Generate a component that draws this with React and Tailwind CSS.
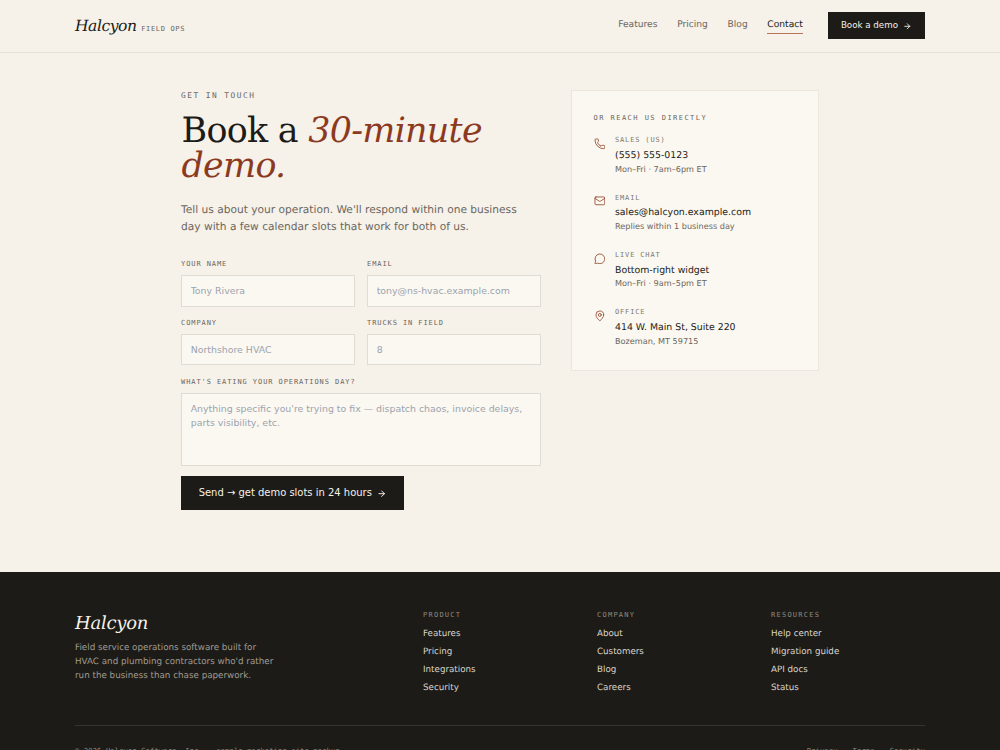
import React from "react";
import { ArrowRight, Mail, MapPin, MessageCircle, Phone } from "lucide-react";

const navLinks = ["Features", "Pricing", "Blog", "Contact"];

const contacts = [
  { icon: Phone, label: "Sales (US)", value: "(555) 555-0123", note: "Mon–Fri · 7am–6pm ET" },
  { icon: Mail, label: "Email", value: "sales@halcyon.example.com", note: "Replies within 1 business day" },
  { icon: MessageCircle, label: "Live chat", value: "Bottom-right widget", note: "Mon–Fri · 9am–5pm ET" },
  { icon: MapPin, label: "Office", value: "414 W. Main St, Suite 220", note: "Bozeman, MT 59715" },
];

const footerColumns = [
  { title: "Product", links: ["Features", "Pricing", "Integrations", "Security"] },
  { title: "Company", links: ["About", "Customers", "Blog", "Careers"] },
  { title: "Resources", links: ["Help center", "Migration guide", "API docs", "Status"] },
];

const mono = "font-['DejaVu_Sans_Mono',monospace]";
const serif = "font-['DejaVu_Serif',serif]";
const inputStyle =
  "block w-full rounded-none border border-[#dfdcd3] bg-[#fbf8f1] px-[8.7px] text-[9.4px] text-[#1c1b17] placeholder:text-[#9ca3af] outline-none";

function Field({ label, children }) {
  return (
    <label className="block">
      <span
        className={`${mono} block mb-[5px] text-[7.03px] leading-[10.5px] tracking-[0.91px] uppercase text-[#6b675e]`}
      >
        {label}
      </span>
      {children}
    </label>
  );
}

function Header() {
  return (
    <header className="h-[52.6px] shrink-0 border-b border-[#e6e2d9]">
      <div className="mx-auto flex h-full w-[850px] items-center justify-between">
        <a href="#" className="flex items-baseline gap-[4.7px]">
          <span className={`${serif} text-[15.6px] leading-[24px] italic tracking-[-0.48px]`}>Halcyon</span>
          <span className={`${mono} text-[7.03px] tracking-[0.66px] uppercase text-[#6b675e]`}>Field Ops</span>
        </a>
        <div className="flex items-center">
          <nav className="flex gap-[19.7px] text-[9.12px] leading-[14px]">
            {navLinks.map((link) => (
              <a
                key={link}
                href="#"
                className={
                  link === "Contact"
                    ? "border-b border-[#b8735c] pb-px text-[#1c1b17]"
                    : "border-b border-transparent pb-px text-[#6b675e]"
                }
              >
                {link}
              </a>
            ))}
          </nav>
          <button className="ml-[24.7px] flex h-[27px] w-[97.5px] items-center justify-center gap-[5px] bg-[#1c1b17] text-[8.7px] text-[#f6f1e9]">
            Book a demo
            <ArrowRight className="mt-px size-[8.6px]" strokeWidth={2.5} />
          </button>
        </div>
      </div>
    </header>
  );
}

function DemoForm() {
  return (
    <form className="w-[360px]" onSubmit={(e) => e.preventDefault()}>
      <div className="grid grid-cols-2 gap-x-[12px] gap-y-[11.8px]">
        <Field label="Your name">
          <input className={`${inputStyle} h-[31.6px]`} placeholder="Tony Rivera" />
        </Field>
        <Field label="Email">
          <input className={`${inputStyle} h-[31.6px]`} placeholder="tony@ns-hvac.example.com" />
        </Field>
        <Field label="Company">
          <input className={`${inputStyle} h-[31.6px]`} placeholder="Northshore HVAC" />
        </Field>
        <Field label="Trucks in field">
          <input className={`${inputStyle} h-[31.6px]`} placeholder="8" />
        </Field>
        <div className="col-span-2">
          <Field label="What's eating your operations day?">
            <textarea
              className={`${inputStyle} h-[73.6px] resize-none py-[7.8px] leading-[14.06px]`}
              placeholder="Anything specific you're trying to fix — dispatch chaos, invoice delays, parts visibility, etc."
            />
          </Field>
        </div>
      </div>
      <button className="mt-[9.5px] flex h-[34px] w-[223.4px] items-center justify-center gap-[5.5px] bg-[#1c1b17] pt-px text-[9.97px] text-[#f6f1e9]">
        Send → get demo slots in 24 hours
        <ArrowRight className="size-[9.4px]" strokeWidth={2.5} />
      </button>
    </form>
  );
}

function ContactCard() {
  return (
    <aside className="h-[281px] w-[248.5px] border border-[#ebe7de] bg-[#fbf8f1] px-[22px] pt-[21px]">
      <h2 className={`${mono} text-[7.03px] leading-[11px] tracking-[1.46px] uppercase text-[#6b675e]`}>
        Or reach us directly
      </h2>
      <ul className="mt-[12px] flex flex-col gap-[17.7px]">
        {contacts.map(({ icon: Icon, label, value, note }) => (
          <li key={label} className="flex gap-[9.8px]">
            <Icon className="mt-[2.5px] size-[11.7px] text-[#8b3a1f]" strokeWidth={1.6} />
            <div>
              <p className={`${mono} text-[7.03px] leading-[10.5px] tracking-[0.84px] uppercase text-[#7d7970]`}>
                {label}
              </p>
              <p className="mt-[3px] text-[9.375px] leading-[14px]">{value}</p>
              <p className="-mt-[0.2px] text-[8.15px] leading-[12.3px] text-[#6b675e]">{note}</p>
            </div>
          </li>
        ))}
      </ul>
    </aside>
  );
}

function Footer() {
  return (
    <footer className="mt-[62.3px] flex-1 bg-[#1c1b17] pt-[37.5px] text-[#f6f1e9]">
      <div className="mx-auto w-[850px]">
        <div className="grid h-[115.2px] grid-cols-[348px_174px_174px_154px]">
          <div className="pt-px">
            <p className={`${serif} text-[18px] leading-[25px] italic tracking-[-0.25px]`}>Halcyon</p>
            <p className="mt-[6.8px] w-[204px] text-[8.75px] leading-[13.75px] text-[#a09c93]">
              Field service operations software built for HVAC and plumbing contractors who'd rather run the
              business than chase paperwork.
            </p>
          </div>
          {footerColumns.map((column) => (
            <div key={column.title} className="pt-[0.6px]">
              <h3 className={`${mono} text-[7.03px] leading-[10.5px] tracking-[1.24px] uppercase text-[#8f8b82]`}>
                {column.title}
              </h3>
              <ul className="mt-[7.1px] flex flex-col gap-[5.2px] text-[8.73px] leading-[13px] text-[#d9d5cc]">
                {column.links.map((link) => (
                  <li key={link}>
                    <a href="#">{link}</a>
                  </li>
                ))}
              </ul>
            </div>
          ))}
        </div>
        <div
          className={`${mono} flex justify-between border-t border-[#34332f] pt-[18.8px] text-[7.03px] leading-[11px] tracking-[0.19px] text-[#8f8b82]`}
        >
          <span>© 2026 Halcyon Software, Inc. · sample marketing site mockup</span>
          <div className="flex gap-[15px]">
            <a href="#">Privacy</a>
            <a href="#">Terms</a>
            <a href="#">Security</a>
          </div>
        </div>
      </div>
    </footer>
  );
}

export default function App() {
  return (
    <div className="flex h-[750px] flex-col overflow-hidden bg-[#f6f1e9] font-['DejaVu_Sans',sans-serif] text-[#1c1b17] [text-rendering:geometricPrecision]">
      <Header />
      <main className="mx-auto flex w-[638px] shrink-0 items-start justify-between pt-[37.9px]">
        <section>
          <p className={`${mono} text-[7.81px] leading-[11.7px] tracking-[1.5px] uppercase text-[#6b675e]`}>
            Get in touch
          </p>
          <h1 className={`${serif} mt-[12.1px] w-[360px] pl-[0.5px] text-[34.9px] leading-[35.2px] tracking-[-0.72px]`}>
            Book a <em className="text-[#8b3a1f]">30-minute demo.</em>
          </h1>
          <p className="mt-[16.4px] mb-[24.4px] w-[350px] text-[10.65px] leading-[17px] text-[#6b675e]">
            Tell us about your operation. We'll respond within one business day with a few calendar slots that work
            for both of us.
          </p>
          <DemoForm />
        </section>
        <ContactCard />
      </main>
      <Footer />
    </div>
  );
}
